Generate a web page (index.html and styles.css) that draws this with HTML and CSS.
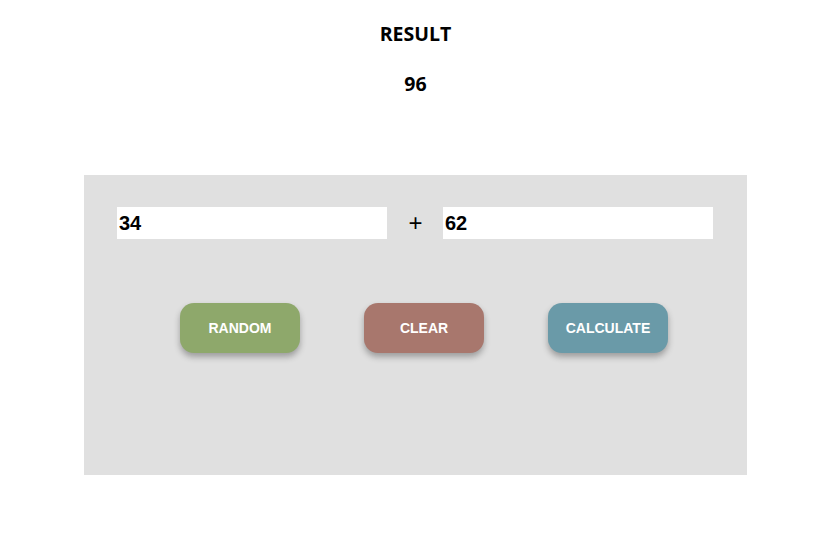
FILE: index.html
```html
<!DOCTYPE html>
<html>
<head>
<meta charset="utf-8">
<link rel="stylesheet" href="styles.css">
</head>
<body>
<div class="result">
  <div class="result-title">RESULT</div>
  <div class="result-value">96</div>
</div>
<div class="panel">
  <div class="inputs">
    <input class="num" type="text" value="34">
    <span class="op">+</span>
    <input class="num" type="text" value="62">
  </div>
  <div class="buttons">
    <button class="btn btn-random">RANDOM</button>
    <button class="btn btn-clear">CLEAR</button>
    <button class="btn btn-calc">CALCULATE</button>
  </div>
</div>
</body>
</html>
```
FILE: styles.css
```css
html, body {
  margin: 0;
  padding: 0;
  background: #ffffff;
}
body {
  width: 813px;
  height: 533px;
  overflow: hidden;
}
.result {
  display: flex;
  flex-direction: column;
  align-items: center;
  width: 663px;
  margin-left: 84px;
  padding-top: 22px;
  font-family: "Open Sans", "DejaVu Sans", sans-serif;
  font-weight: 700;
  font-size: 19.5px;
  color: #000;
}
.result-title {
  line-height: 24px;
}
.result-value {
  line-height: 24px;
  margin-top: 26px;
}
.panel {
  margin: 79px 0 0 84px;
  width: 663px;
  height: 300px;
  background: #e0e0e0;
  box-sizing: border-box;
  padding: 32px 0 0 33px;
}
.inputs {
  display: flex;
  align-items: center;
  justify-content: space-between;
  width: 596px;
}
.num {
  width: 270px;
  height: 32px;
  box-sizing: border-box;
  border: none;
  outline: none;
  background: #fff;
  padding: 0 2px;
  margin: 0;
  font-family: "Liberation Sans", Arial, sans-serif;
  font-weight: 700;
  font-size: 20px;
  color: #000;
}
.op {
  font-family: "Liberation Sans", Arial, sans-serif;
  font-size: 24px;
  color: #000;
  line-height: 32px;
  padding-left: 1px;
}
.buttons {
  display: flex;
  gap: 64px;
  margin-top: 64px;
  padding-left: 63px;
}
.btn {
  width: 120px;
  height: 50px;
  border: none;
  border-radius: 14px;
  color: #fff;
  font-family: "Liberation Sans", Arial, sans-serif;
  font-weight: 700;
  font-size: 14px;
  box-shadow: 0 4px 6px rgba(0, 0, 0, 0.3);
  padding: 0;
  cursor: pointer;
}
.btn-random { background: #8ea86b; }
.btn-clear { background: #a8776d; }
.btn-calc { background: #6a9aa8; }
```
